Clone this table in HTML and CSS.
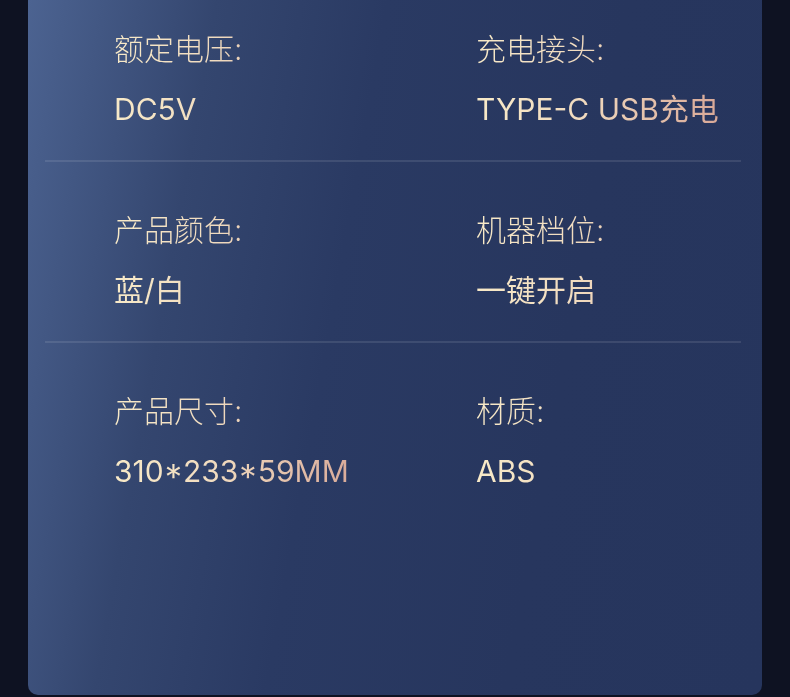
FILE: index.html
```html
<!DOCTYPE html>
<html lang="zh-CN">
<head>
    <meta charset="UTF-8">
    <meta name="viewport" content="width=device-width, initial-scale=1.0">
    <title>产品参数</title>
    <link rel="stylesheet" href="styles.css">
</head>
<body>
    <!-- 产品参数卡片 -->
    <div class="card">
        <div class="spec">
            <div class="item">
                <div class="label">额定电压:</div>
                <div class="value">DC5V</div>
            </div>
            <div class="item">
                <div class="label">充电接头:</div>
                <div class="value">TYPE-C USB充电</div>
            </div>
        </div>
        <div class="spec">
            <div class="item">
                <div class="label">产品颜色:</div>
                <div class="value">蓝/白</div>
            </div>
            <div class="item">
                <div class="label">机器档位:</div>
                <div class="value">一键开启</div>
            </div>
        </div>
        <div class="spec last">
            <div class="item">
                <div class="label">产品尺寸:</div>
                <div class="value">310*233*59MM</div>
            </div>
            <div class="item">
                <div class="label">材质:</div>
                <div class="value">ABS</div>
            </div>
        </div>
    </div>
</body>
</html>
```

FILE: styles.css
```css
/* 全局 */
body, html {
    margin: 0;
    padding: 0;
    height: 100%;
    background-color: #0e1222;
    font-family: 'Inter', 'Noto Sans CJK SC', sans-serif;
    overflow: hidden;
}

/* 卡片 */
.card {
    width: 734px;
    height: 695px;
    margin: 0 28px;
    box-sizing: border-box;
    padding: 0 21px 0 17px;
    background: linear-gradient(100deg, #4c6391 0%, #34466f 22%, #2a3a63 42%, #27365e 70%, #26355d 100%);
    border-radius: 0 0 10px 10px;
}

/* 每一行参数 */
.spec {
    display: grid;
    grid-template-columns: 362px 1fr;
    padding: 48px 0 31px 69px;
    border-bottom: 2px solid rgba(255, 255, 255, 0.1);
}

.spec:first-child {
    padding-top: 29px;
}

.spec.last {
    border-bottom: none;
}

.label,
.value {
    font-size: 30px;
    line-height: 40px;
    width: 250px;
    white-space: nowrap;
    background: linear-gradient(90deg, #f8eac8 0%, #f1dcc0 40%, #d7a696 100%);
    -webkit-background-clip: text;
    background-clip: text;
    color: transparent;
}

.label {
    font-weight: 300;
    margin-bottom: 20px;
}

.value {
    font-weight: 400;
}
```
